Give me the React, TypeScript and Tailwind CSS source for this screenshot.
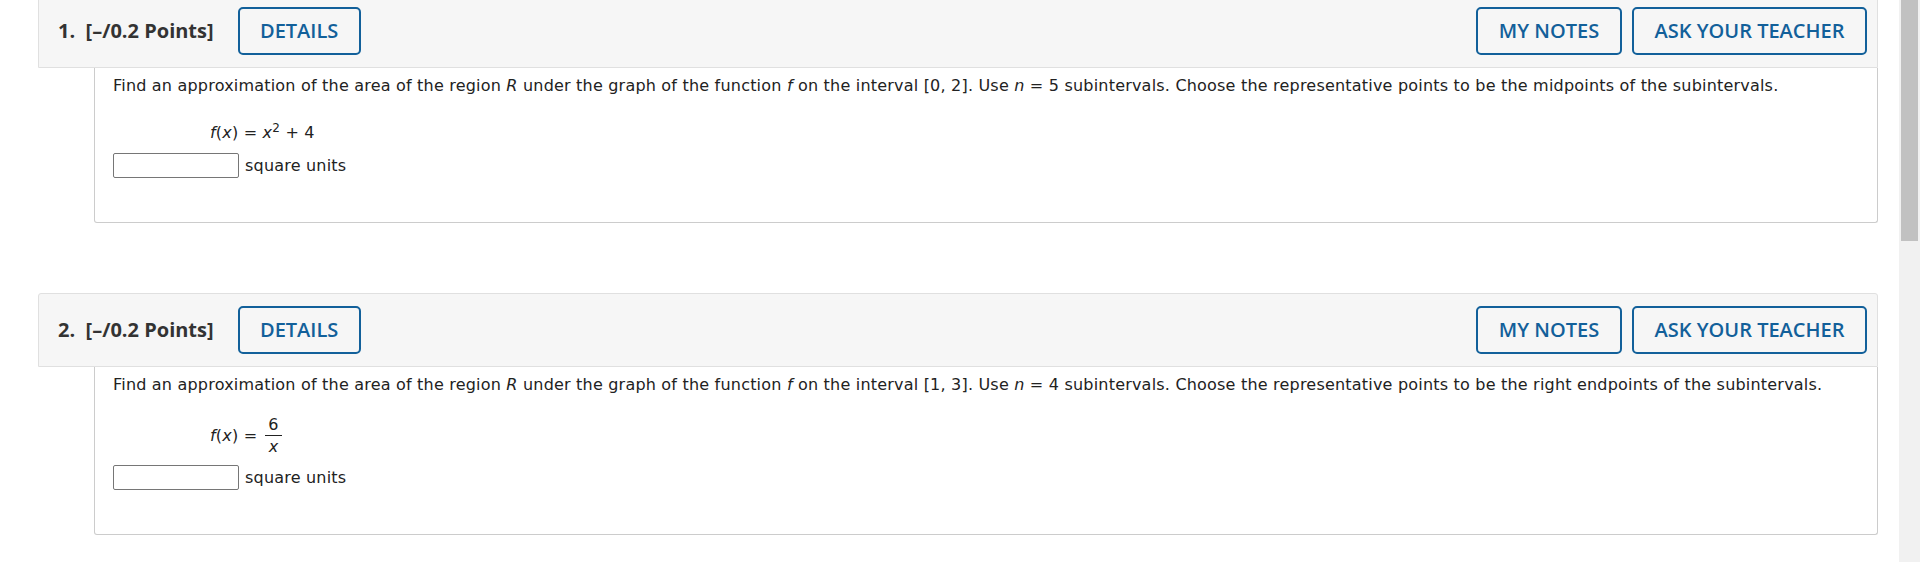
import React from 'react'

interface Question {
  num: number
  interval: string
  n: number
  points: string
  formula: React.ReactNode
  formulaGap: string
  inputGap: string
}

const headFont = { fontFamily: '"Open Sans", "Liberation Sans", sans-serif' }
const bodyFont = { fontFamily: '"DejaVu Sans", Verdana, sans-serif' }

const OutlineButton = ({ label, className }: { label: string; className?: string }) => (
  <button
    type="button"
    className={
      'h-[48px] rounded-[5px] border-2 border-[#12609a] bg-[#f6f6f6] text-[20px] font-semibold text-[#12609a] ' +
      (className ?? '')
    }
    style={headFont}
  >
    {label}
  </button>
)

const QuestionBlock = ({ q }: { q: Question }) => (
  <div>
    {/* Header bar */}
    <div className="ml-[38px] mr-[21px] flex h-[74px] items-center rounded-t-[3px] border border-[#e0e0e0] bg-[#f6f6f6] pl-[19px] pr-[10px]">
      <span className="text-[20px] font-bold text-[#333]" style={headFont}>
        {q.num}.&nbsp;&nbsp;[–/0.2 Points]
      </span>
      <OutlineButton label="DETAILS" className="ml-[24px] w-[123px]" />
      <div className="flex-1" />
      <OutlineButton label="MY NOTES" className="w-[146px]" />
      <OutlineButton label="ASK YOUR TEACHER" className="ml-[10px] w-[235px]" />
    </div>

    {/* Body */}
    <div
      className="ml-[94px] mr-[21px] rounded-b-[3px] border border-t-0 border-[#cccccc] bg-white pl-[18px] pt-[7px] pb-[44px] text-[16px] tracking-[0.2px] text-[#222]"
      style={bodyFont}
    >
      <p className="leading-[22px]">
        Find an approximation of the area of the region <i>R</i> under the graph of the function <i>f</i> on the
        interval {q.interval}. Use <i>n</i> = {q.n} subintervals. Choose the representative points to be the {q.points} of
        the subintervals.
      </p>
      <div className={'ml-[97px] flex items-center ' + q.formulaGap}>{q.formula}</div>
      <div className={'flex items-center ' + q.inputGap}>
        <input
          type="text"
          className="h-[25px] w-[126px] rounded-[2px] border border-[#767676] bg-white"
        />
        <span className="ml-[6px]">square units</span>
      </div>
    </div>
  </div>
)

const questions: Question[] = [
  {
    num: 1,
    interval: '[0, 2]',
    n: 5,
    points: 'midpoints',
    formulaGap: 'mt-[23px]',
    inputGap: 'mt-[7px]',
    formula: (
      <span className="leading-[26px]">
        <i>f</i>(<i>x</i>) = <i>x</i>
        <sup className="text-[12px]">2</sup> + 4
      </span>
    ),
  },
  {
    num: 2,
    interval: '[1, 3]',
    n: 4,
    points: 'right endpoints',
    formulaGap: 'mt-[18px]',
    inputGap: 'mt-[8px]',
    formula: (
      <span className="flex items-center">
        <span>
          <i>f</i>(<i>x</i>) =
        </span>
        <span className="ml-[8px] inline-flex flex-col items-center">
          <span className="border-b border-[#222] px-[3px] leading-[21px]">6</span>
          <i className="leading-[21px]">x</i>
        </span>
      </span>
    ),
  },
]

export default function App() {
  return (
    <div className="flex h-[562px] overflow-hidden bg-white">
      <main className="flex-1">
        <div className="-mt-[6px] flex flex-col gap-[70px]">
          {questions.map((q) => (
            <QuestionBlock key={q.num} q={q} />
          ))}
        </div>
      </main>
      {/* scrollbar */}
      <div className="w-[21px] bg-[#f1f1f1] pl-[2px] pr-[2px]">
        <div className="h-[241px] bg-[#c1c1c1]" />
      </div>
    </div>
  )
}
